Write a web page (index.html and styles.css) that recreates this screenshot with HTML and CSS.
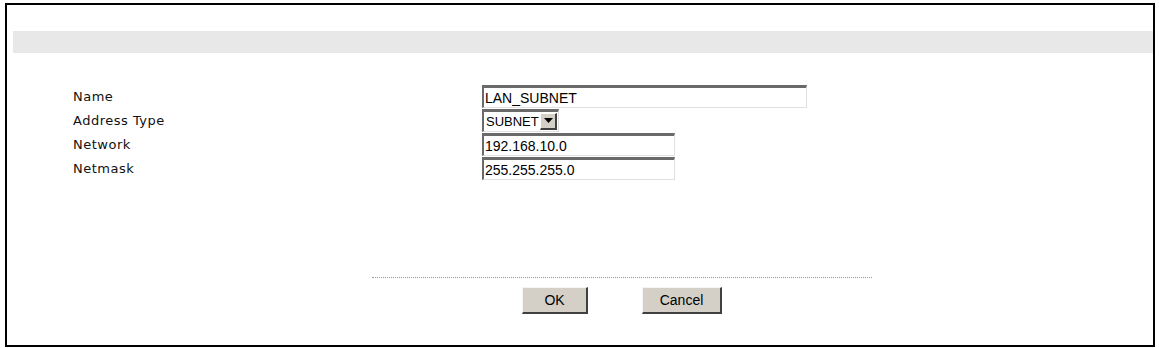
FILE: index.html
```html
<!DOCTYPE html>
<html lang="en">
<head>
  <meta charset="UTF-8">
  <title>Address Edit</title>
  <link rel="stylesheet" href="styles.css">
</head>
<body>

  <div class="frame">
    <div class="title-bar"></div>

    <div class="form-grid">
      <label>Name</label>
      <div><input class="txt wide" type="text" value="LAN_SUBNET"></div>

      <label>Address Type</label>
      <div>
        <span class="select">
          <span class="select-value">SUBNET</span>
          <span class="select-btn">
            <svg width="9" height="5" viewBox="0 0 9 5"><path d="M0 0h9L4.5 5z" fill="#000"/></svg>
          </span>
        </span>
      </div>

      <label>Network</label>
      <div><input class="txt" type="text" value="192.168.10.0"></div>

      <label>Netmask</label>
      <div><input class="txt" type="text" value="255.255.255.0"></div>
    </div>

    <div class="actions">
      <div class="sep"></div>
      <div class="buttons">
        <button class="btn ok">OK</button>
        <button class="btn cancel">Cancel</button>
      </div>
    </div>
  </div>

</body>
</html>
```

FILE: styles.css
```css
body {
  margin: 0;
  padding-top: 3px;
  background: #fff;
  font-family: "DejaVu Sans", Verdana, sans-serif;
  font-size: 13px;
  color: #000;
}

.frame {
  margin: 0 4px 0 5px;
  height: 340px;
  border: 2px solid #000;
  background: #fff;
}

.title-bar {
  margin: 26px 0 0 6px;
  height: 22px;
  background: #e8e8e8;
}

.form-grid {
  display: grid;
  grid-template-columns: 409px auto;
  grid-auto-rows: 24px;
  align-items: center;
  margin-top: 31px;
  padding-left: 66px;
}

.form-grid label {
  color: #111;
  letter-spacing: 0.5px;
}

.txt {
  box-sizing: border-box;
  height: 23px;
  width: 193px;
  padding: 1px 1px 0;
  font-family: "Liberation Sans", Arial, sans-serif;
  font-size: 14px;
  color: #000;
  background: #fff;
  border-style: solid;
  border-width: 3px 1px 1px 2px;
  border-color: #6a6a6a #e0e0e0 #e0e0e0 #6a6a6a;
  outline: none;
}

.txt.wide {
  width: 325px;
}

.select {
  box-sizing: border-box;
  display: inline-flex;
  align-items: center;
  height: 23px;
  width: 77px;
  border-style: solid;
  border-width: 3px 1px 1px 2px;
  border-color: #6a6a6a #e0e0e0 #e0e0e0 #6a6a6a;
  font-family: "Liberation Sans", Arial, sans-serif;
  font-size: 13px;
}

.select-value {
  flex: 1;
  padding-left: 2px;
}

.select-btn {
  box-sizing: border-box;
  display: flex;
  align-items: center;
  justify-content: center;
  width: 17px;
  height: 17px;
  margin-right: 1px;
  background: #d4d0c8;
  border-style: solid;
  border-width: 1px 2px 2px 1px;
  border-color: #fff #404040 #404040 #fff;
}

.actions {
  margin-top: 97px;
  display: flex;
  flex-direction: column;
  align-items: center;
  width: 500px;
  margin-left: 365px;
}

.sep {
  width: 100%;
  border-top: 1px dotted #9a9a9a;
}

.buttons {
  display: flex;
  gap: 54px;
  margin-top: 9px;
}

.btn {
  box-sizing: border-box;
  height: 27px;
  font-family: "Liberation Sans", Arial, sans-serif;
  font-size: 14px;
  color: #000;
  background: #d4d0c8;
  border-style: solid;
  border-width: 1px 2px 2px 1px;
  border-color: #f4f4f4 #404040 #404040 #f4f4f4;
  padding: 0;
}

.btn.ok { width: 66px; }
.btn.cancel { width: 80px; }
```
